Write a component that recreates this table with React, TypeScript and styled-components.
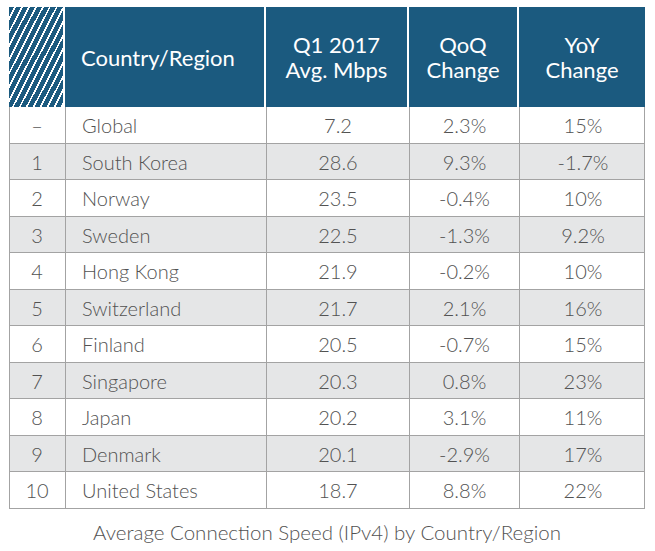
import React from 'react'
import styled, { createGlobalStyle } from 'styled-components'

const GlobalStyle = createGlobalStyle`
  html, body {
    margin: 0;
    padding: 0;
    background: #ffffff;
  }
  body {
    font-family: Lato, "Open Sans", "Liberation Sans", sans-serif;
  }
`;

const colors = {
  header: '#1b5a7f',
  text: '#525252',
  line: '#a3a3a3',
  stripe: '#e5e6e7',
}

const columns = '56px 201px 143px 110px 126px'

const Page = styled.div`
  width: 655px;
  padding: 7px 0 0 9px;
  box-sizing: border-box;
`;

const Table = styled.div`
  width: 636px;
  display: flex;
  flex-direction: column;
`;

const HeaderRow = styled.div`
  display: grid;
  grid-template-columns: ${columns};
  height: 100px;
`;

const HeaderCell = styled.div<{ $left?: boolean; $last?: boolean }>`
  background: ${colors.header};
  color: #ffffff;
  font-size: 22px;
  font-weight: 400;
  line-height: 25px;
  display: flex;
  flex-direction: column;
  justify-content: center;
  align-items: ${p => (p.$left ? 'flex-start' : 'center')};
  text-align: ${p => (p.$left ? 'left' : 'center')};
  padding-left: ${p => (p.$left ? '16px' : '0')};
  border-right: ${p => (p.$last ? 'none' : '2px solid #ffffff')};
`;

const Hatch = styled.div`
  border-right: 2px solid #ffffff;
  background: repeating-linear-gradient(
    117deg,
    ${colors.header} 0px,
    ${colors.header} 4.5px,
    #ffffff 4.5px,
    #ffffff 6.2px
  );
`;

const Row = styled.div<{ $shade: boolean; $h: number }>`
  display: grid;
  grid-template-columns: ${columns};
  height: ${p => p.$h}px;
  box-sizing: border-box;
  background: ${p => (p.$shade ? colors.stripe : '#ffffff')};
  border-bottom: 1px solid ${colors.line};
  border-left: 1px solid ${colors.line};
  border-right: 1px solid ${colors.line};
`;

const Cell = styled.div<{ $left?: boolean; $last?: boolean }>`
  display: flex;
  align-items: center;
  justify-content: ${p => (p.$left ? 'flex-start' : 'center')};
  padding-left: ${p => (p.$left ? '16px' : '0')};
  border-right: ${p => (p.$last ? 'none' : `1px solid ${colors.line}`)};
  color: ${colors.text};
  font-size: 20px;
  font-weight: 300;
  white-space: nowrap;
`;

const RankCell = styled(Cell)`
  margin-left: -1px;
`;

const Caption = styled.div`
  width: 636px;
  text-align: center;
  color: ${colors.text};
  font-size: 20.5px;
  font-weight: 300;
  margin-top: 11px;
`;

type Entry = {
  rank: string
  country: string
  avg: string
  qoq: string
  yoy: string
}

const data: Entry[] = [
  { rank: '–', country: 'Global', avg: '7.2', qoq: '2.3%', yoy: '15%' },
  { rank: '1', country: 'South Korea', avg: '28.6', qoq: '9.3%', yoy: '-1.7%' },
  { rank: '2', country: 'Norway', avg: '23.5', qoq: '-0.4%', yoy: '10%' },
  { rank: '3', country: 'Sweden', avg: '22.5', qoq: '-1.3%', yoy: '9.2%' },
  { rank: '4', country: 'Hong Kong', avg: '21.9', qoq: '-0.2%', yoy: '10%' },
  { rank: '5', country: 'Switzerland', avg: '21.7', qoq: '2.1%', yoy: '16%' },
  { rank: '6', country: 'Finland', avg: '20.5', qoq: '-0.7%', yoy: '15%' },
  { rank: '7', country: 'Singapore', avg: '20.3', qoq: '0.8%', yoy: '23%' },
  { rank: '8', country: 'Japan', avg: '20.2', qoq: '3.1%', yoy: '11%' },
  { rank: '9', country: 'Denmark', avg: '20.1', qoq: '-2.9%', yoy: '17%' },
  { rank: '10', country: 'United States', avg: '18.7', qoq: '8.8%', yoy: '22%' },
]

export default function App() {
  return (
    <Page>
      <GlobalStyle />
      <Table>
        <HeaderRow>
          <Hatch />
          <HeaderCell $left>Country/Region</HeaderCell>
          <HeaderCell>
            <span>Q1 2017</span>
            <span>Avg. Mbps</span>
          </HeaderCell>
          <HeaderCell>
            <span>QoQ</span>
            <span>Change</span>
          </HeaderCell>
          <HeaderCell $last>
            <span>YoY</span>
            <span>Change</span>
          </HeaderCell>
        </HeaderRow>
        {data.map((d, i) => (
          <Row key={d.country} $shade={i % 2 === 1} $h={i % 2 === 0 ? 37 : 36}>
            <RankCell>{d.rank}</RankCell>
            <Cell $left>{d.country}</Cell>
            <Cell>{d.avg}</Cell>
            <Cell>{d.qoq}</Cell>
            <Cell $last>{d.yoy}</Cell>
          </Row>
        ))}
      </Table>
      <Caption>Average Connection Speed (IPv4) by Country/Region</Caption>
    </Page>
  )
}
